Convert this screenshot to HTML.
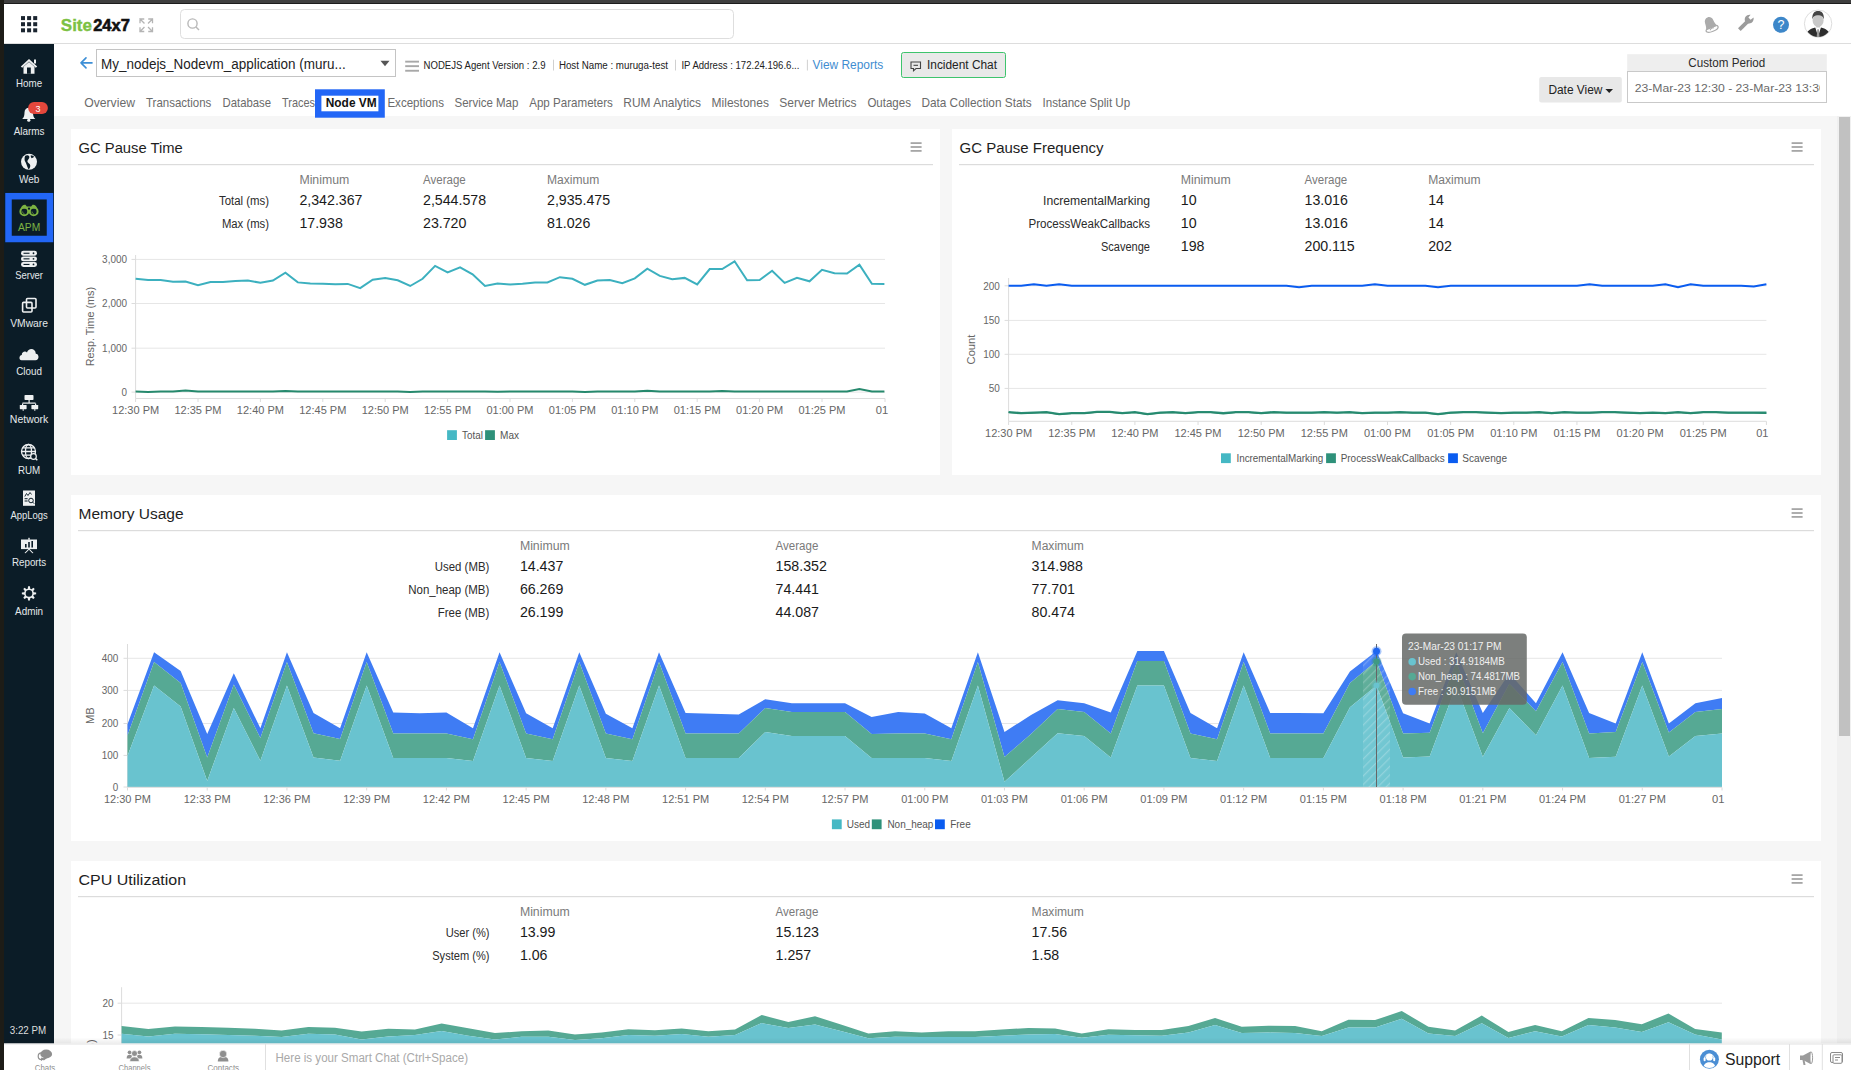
<!DOCTYPE html>
<html><head><meta charset="utf-8"><title>Site24x7 APM - Node VM</title>
<style>html,body{margin:0;padding:0;width:1851px;height:1070px;overflow:hidden;background:#f5f5f5;font-family:"Liberation Sans",sans-serif}svg{display:block}</style>
</head><body><svg width="1851" height="1070" viewBox="0 0 1851 1070" font-family="'Liberation Sans', sans-serif"><rect x="0" y="0" width="1851" height="1070" fill="#f6f6f6"/><rect x="0" y="0" width="1851" height="4" fill="#3f3f3f"/><rect x="0" y="3" width="1851" height="1" fill="#1c1c1c"/><rect x="0" y="0" width="4" height="1070" fill="#1d1c17"/><rect x="4" y="4" width="1847" height="40" fill="#ffffff"/><rect x="4" y="43" width="1847" height="1" fill="#dddddd"/><rect x="4" y="44" width="50" height="1000" fill="#0b1c27"/><rect x="54" y="44" width="1797" height="72" fill="#ffffff"/><rect x="1837" y="116" width="14" height="928" fill="#f0f0f0"/><rect x="1839" y="117" width="11" height="619" fill="#c1c1c1"/><rect x="21.0" y="16.1" width="4.0" height="4.0" fill="#1b2530"/><rect x="21.0" y="22.200000000000003" width="4.0" height="4.0" fill="#1b2530"/><rect x="21.0" y="28.3" width="4.0" height="4.0" fill="#1b2530"/><rect x="27.1" y="16.1" width="4.0" height="4.0" fill="#1b2530"/><rect x="27.1" y="22.200000000000003" width="4.0" height="4.0" fill="#1b2530"/><rect x="27.1" y="28.3" width="4.0" height="4.0" fill="#1b2530"/><rect x="33.2" y="16.1" width="4.0" height="4.0" fill="#1b2530"/><rect x="33.2" y="22.200000000000003" width="4.0" height="4.0" fill="#1b2530"/><rect x="33.2" y="28.3" width="4.0" height="4.0" fill="#1b2530"/><text x="60.8" y="31.1" font-size="16.6" fill="#7cc142" font-weight="bold" textLength="31.2" lengthAdjust="spacingAndGlyphs" stroke="#7cc142" stroke-width="0.35">Site</text><text x="93.2" y="31.1" font-size="16.6" fill="#111111" font-weight="bold" textLength="36.7" lengthAdjust="spacingAndGlyphs" stroke="#111" stroke-width="0.6">24x7</text><g stroke="#b4b4b4" stroke-width="1.3" fill="none" stroke-linecap="square"><path d="M140 19 L144 23 M140 19 h3.6 M140 19 v3.6"/><path d="M152.5 19 L148.5 23 M152.5 19 h-3.6 M152.5 19 v3.6"/><path d="M140 31.5 L144 27.5 M140 31.5 h3.6 M140 31.5 v-3.6"/><path d="M152.5 31.5 L148.5 27.5 M152.5 31.5 h-3.6 M152.5 31.5 v-3.6"/></g><rect x="180.5" y="9.5" width="553" height="29" rx="4" fill="#fff" stroke="#dedede"/><g stroke="#b8b8b8" stroke-width="1.4" fill="none"><circle cx="192.5" cy="23.5" r="4.6"/><path d="M196 27 L199 30"/></g><g transform="translate(1710.2,24.2) rotate(-22)" fill="#ababab"><path d="M-6.3 4.2 C-4.8 2.5 -4.6 -0.5 -4.4 -2.8 C-4.1 -5.8 -2.3 -7.3 0 -7.3 C2.3 -7.3 4.1 -5.8 4.4 -2.8 C4.6 -0.5 4.8 2.5 6.3 4.2 Z"/><ellipse cx="0" cy="5" rx="6.4" ry="2.6" fill="none" stroke="#ababab" stroke-width="1.3"/><path d="M-2.5 5.6 C-1 4.2 1 4.2 2 4.8" stroke="#ababab" stroke-width="1" fill="none"/></g><g fill="#9c9c9c"><path d="M1738 28.3 L1746.6 19.8 L1749.3 22.5 L1740.7 31 Z"/><path d="M1745.2 21.5 C1743.6 17.8 1746.5 14.2 1750.6 14.8 L1748.4 17.6 L1750.6 19.8 L1753.6 17.6 C1754.2 21.6 1751.2 24.6 1747.2 23.2 Z"/></g><circle cx="1781" cy="24.8" r="8" fill="#3d87c9"/><text x="1781.0" y="29.3" font-size="12.5" fill="#ffffff" text-anchor="middle">?</text><g><circle cx="1818.1" cy="23.7" r="13.7" fill="#fff" stroke="#d4d4d4" stroke-width="0.8"/><clipPath id="av"><circle cx="1818.1" cy="23.7" r="13.3"/></clipPath><g clip-path="url(#av)"><rect x="1816.2" y="25" width="3.8" height="4" fill="#c8c8c8"/><path d="M1805.5 36 C1807 30.5 1810.5 28.6 1815.3 27.4 L1818.1 36.5 L1820.9 27.4 C1825.7 28.6 1829.2 30.5 1830.7 36 L1830.7 40 L1805.5 40 Z" fill="#2d2d2d"/><path d="M1815.3 27.4 L1818.1 30.5 L1820.9 27.4 Z" fill="#fff"/><path d="M1817.3 29.2 L1818.9 29.2 L1819.6 38 L1816.6 38 Z" fill="#9a9a9a"/><ellipse cx="1818.1" cy="20.6" rx="5.5" ry="6.3" fill="#c8c8c8"/><path d="M1812.4 19.5 C1811.8 13.5 1814.5 11 1818.1 11 C1821.7 11 1824.4 13.5 1823.8 19.5 C1823.2 16.2 1821.2 15.2 1818.1 15.2 C1815 15.2 1813 16.2 1812.4 19.5 Z" fill="#454545"/></g></g><rect x="8.5" y="196.2" width="41.5" height="42.8" fill="none" stroke="#2266f6" stroke-width="6.5"/><text x="29.1" y="86.9" font-size="10.2" fill="#e4e8ea" text-anchor="middle" textLength="26.1" lengthAdjust="spacingAndGlyphs">Home</text><text x="29.1" y="134.6" font-size="10.2" fill="#e4e8ea" text-anchor="middle" textLength="30.9" lengthAdjust="spacingAndGlyphs">Alarms</text><text x="29.1" y="183.2" font-size="10.2" fill="#e4e8ea" text-anchor="middle" textLength="20.4" lengthAdjust="spacingAndGlyphs">Web</text><text x="29.1" y="231.1" font-size="10.2" fill="#7cb342" text-anchor="middle" textLength="22.2" lengthAdjust="spacingAndGlyphs">APM</text><text x="29.1" y="279.0" font-size="10.2" fill="#e4e8ea" text-anchor="middle" textLength="27.7" lengthAdjust="spacingAndGlyphs">Server</text><text x="29.1" y="327.0" font-size="10.2" fill="#e4e8ea" text-anchor="middle" textLength="37.8" lengthAdjust="spacingAndGlyphs">VMware</text><text x="29.1" y="374.7" font-size="10.2" fill="#e4e8ea" text-anchor="middle" textLength="25.8" lengthAdjust="spacingAndGlyphs">Cloud</text><text x="29.1" y="422.7" font-size="10.2" fill="#e4e8ea" text-anchor="middle" textLength="38.6" lengthAdjust="spacingAndGlyphs">Network</text><text x="29.1" y="473.8" font-size="10.2" fill="#e4e8ea" text-anchor="middle" textLength="22.3" lengthAdjust="spacingAndGlyphs">RUM</text><text x="29.1" y="518.5" font-size="10.2" fill="#e4e8ea" text-anchor="middle" textLength="37.4" lengthAdjust="spacingAndGlyphs">AppLogs</text><text x="29.1" y="566.1" font-size="10.2" fill="#e4e8ea" text-anchor="middle" textLength="34.3" lengthAdjust="spacingAndGlyphs">Reports</text><text x="29.1" y="614.5" font-size="10.2" fill="#e4e8ea" text-anchor="middle" textLength="28.0" lengthAdjust="spacingAndGlyphs">Admin</text><g fill="#eef0f1"><path d="M20.8 66.5 L29 59 L37.2 66.5 L35.8 67.8 L29 61.6 L22.2 67.8 Z"/><path d="M23.5 66.8 L29 62 L34.5 66.8 V73.8 H23.5 Z"/><rect x="34" y="59.5" width="2" height="4"/></g><rect x="27" y="67.5" width="3.8" height="6.3" fill="#0b1c27"/><g fill="#eef0f1"><path d="M22.2 119 C24 117.5 24.5 115 24.5 112.5 C24.5 109.5 26.5 107.8 28.8 107.8 C31.1 107.8 33 109.5 33 112.5 C33 115 33.5 117.5 35.3 119 Z"/><circle cx="28.8" cy="120.2" r="1.6"/></g><rect x="28.1" y="102.1" width="19.8" height="11.9" rx="5.9" fill="#e4473c"/><text x="37.9" y="111.6" font-size="9" fill="#ffffff" text-anchor="middle">3</text><circle cx="29" cy="161.8" r="8" fill="#eef0f1"/><path d="M25.2 155.8 C26.8 154.8 28.6 155.2 29.3 156.6 C29.8 158 28.4 159.2 27.6 160.4 C27 161.4 27.8 162.6 29 163.4 C30.4 164.4 30.8 166 29.6 168.2 L28.6 169.6 C27.8 167.8 27 166.2 26.4 164.2 C26 162.6 24.8 161.6 24.6 160 C24.4 158.4 24.6 157 25.2 155.8 Z M30.8 155.2 C32.2 155.2 33.6 156 34.2 157 C33.2 157.4 32.4 158.2 31.6 158.2 C31 157.4 30.6 156.4 30.8 155.2 Z" fill="#0b1c27"/><g fill="none" stroke="#7cb342" stroke-width="2"><circle cx="24.3" cy="211.4" r="3.9"/><circle cx="33.7" cy="211.4" r="3.9"/></g><path d="M21 208.5 C21.5 205.5 23.5 204.4 25.5 204.8 L26.8 206.5 L31.2 206.5 L32.5 204.8 C34.5 204.4 36.5 205.5 37 208.5 Z" fill="#7cb342"/><circle cx="29" cy="208.6" r="1.1" fill="#0b1c27"/><path d="M22.6 211.5 C22.6 212.8 23.4 213.6 24.5 213.8 M32 211.5 C32 212.8 32.8 213.6 33.9 213.8" stroke="#7cb342" stroke-width="0.7" fill="none"/><rect x="21" y="250.8" width="16" height="4.9" rx="2.4" fill="#eef0f1"/><rect x="23.5" y="252.70000000000002" width="6" height="1.1" fill="#0b1c27"/><circle cx="33.5" cy="253.25" r="0.9" fill="#0b1c27"/><rect x="21" y="256.4" width="16" height="4.9" rx="2.4" fill="#eef0f1"/><rect x="23.5" y="258.29999999999995" width="6" height="1.1" fill="#0b1c27"/><circle cx="33.5" cy="258.84999999999997" r="0.9" fill="#0b1c27"/><rect x="21" y="262.0" width="16" height="4.9" rx="2.4" fill="#eef0f1"/><rect x="23.5" y="263.9" width="6" height="1.1" fill="#0b1c27"/><circle cx="33.5" cy="264.45" r="0.9" fill="#0b1c27"/><g fill="none" stroke="#eef0f1" stroke-width="1.6"><rect x="26.5" y="298.5" width="9.5" height="9.5" rx="1"/><rect x="22.6" y="302.4" width="9.4" height="9.6" rx="1"/></g><path d="M21.5 360.3 C18.8 360.3 18.8 355.3 21.8 355 C21.5 351.8 25.5 350.5 27 352.5 C28 348 35.5 347.5 35.8 353.8 C39.5 354 39.5 360.3 35.5 360.3 Z" fill="#eef0f1"/><g fill="#eef0f1"><rect x="24.5" y="395" width="9" height="5" rx="0.8"/><rect x="28.5" y="400" width="1.2" height="3"/><rect x="22.5" y="402.5" width="13" height="1.2"/><rect x="22" y="403.5" width="1.2" height="1.8"/><rect x="35" y="403.5" width="1.2" height="1.8"/><rect x="19.8" y="405" width="6.8" height="4.2" rx="0.6"/><rect x="31.4" y="405" width="6.8" height="4.2" rx="0.6"/><rect x="22.6" y="409.2" width="1.2" height="1.5"/><rect x="34.2" y="409.2" width="1.2" height="1.5"/></g><g fill="none" stroke="#eef0f1" stroke-width="1.3"><circle cx="28.5" cy="451.5" r="7"/><ellipse cx="28.5" cy="451.5" rx="3" ry="7"/><path d="M21.5 451.5 H35.5 M22.5 447.8 H34.5 M22.5 455.2 H34.5"/></g><circle cx="33.5" cy="456.5" r="2.8" fill="#0b1c27" stroke="#eef0f1" stroke-width="1.2"/><path d="M35.5 458.5 L37.3 460.3" stroke="#eef0f1" stroke-width="1.4"/><rect x="23" y="490.5" width="12" height="15.3" fill="#eef0f1"/><path d="M24.8 496.5 L26.5 493.5 L28 495.5 L30 492.5 L31.5 494.5" stroke="#0b1c27" stroke-width="0.9" fill="none"/><rect x="24.6" y="498.2" width="3" height="1" fill="#0b1c27"/><rect x="24.6" y="500.5" width="3" height="1" fill="#0b1c27"/><circle cx="31" cy="500.5" r="2.3" fill="none" stroke="#0b1c27" stroke-width="1"/><path d="M32.6 502.1 L34.2 503.7" stroke="#0b1c27" stroke-width="1"/><g fill="#eef0f1"><rect x="21" y="539.5" width="16" height="9.6"/><rect x="28.3" y="537.8" width="1.4" height="2"/><path d="M28.4 549 L24.5 553 L25.6 553.2 L29 549.8 L32.4 553.2 L33.5 553 L29.6 549 Z"/></g><rect x="25" y="544" width="1.6" height="3.5" fill="#0b1c27"/><rect x="28.2" y="542" width="1.6" height="5.5" fill="#0b1c27"/><rect x="31.4" y="541" width="1.6" height="6.5" fill="#0b1c27"/><polygon points="33.74,592.14 36.14,592.47 36.14,594.33 33.74,594.66 33.24,595.86 34.71,597.79 33.39,599.11 31.46,597.64 30.26,598.14 29.93,600.54 28.07,600.54 27.74,598.14 26.54,597.64 24.61,599.11 23.29,597.79 24.76,595.86 24.26,594.66 21.86,594.33 21.86,592.47 24.26,592.14 24.76,590.94 23.29,589.01 24.61,587.69 26.54,589.16 27.74,588.66 28.07,586.26 29.93,586.26 30.26,588.66 31.46,589.16 33.39,587.69 34.71,589.01 33.24,590.94" fill="#eef0f1"/><circle cx="29" cy="593.4" r="3.3" fill="#0b1c27"/><text x="28.0" y="1034.3" font-size="10" fill="#dcdcdc" text-anchor="middle" textLength="36.5" lengthAdjust="spacingAndGlyphs">3:22 PM</text><path d="M81 62.9 H92 M81 62.9 L86 57.9 M81 62.9 L86 67.9" stroke="#3d8fd6" stroke-width="1.6" fill="none" stroke-linecap="round"/><rect x="96.5" y="49.5" width="299" height="27" fill="#fff" stroke="#c4c4c4"/><text x="101.0" y="68.8" font-size="14" fill="#222222" textLength="244.7" lengthAdjust="spacingAndGlyphs">My_nodejs_Nodevm_application (muru...</text><path d="M380.5 60.8 H389.5 L385 66.2 Z" fill="#555"/><rect x="405.2" y="60.7" width="13.8" height="1.9" fill="#a8a8a8"/><rect x="405.2" y="65.2" width="13.8" height="1.9" fill="#a8a8a8"/><rect x="405.2" y="69.8" width="13.8" height="1.9" fill="#a8a8a8"/><text x="423.5" y="68.8" font-size="10" fill="#222" textLength="122.0" lengthAdjust="spacingAndGlyphs">NODEJS Agent Version : 2.9</text><line x1="553.5" y1="59.7" x2="553.5" y2="70.5" stroke="#d0d0d0" stroke-width="1"/><text x="558.9" y="68.8" font-size="10" fill="#222" textLength="109.1" lengthAdjust="spacingAndGlyphs">Host Name : muruga-test</text><line x1="675.5" y1="59.7" x2="675.5" y2="70.5" stroke="#d0d0d0" stroke-width="1"/><text x="681.4" y="68.8" font-size="10" fill="#222" textLength="118.0" lengthAdjust="spacingAndGlyphs">IP Address : 172.24.196.6...</text><line x1="807.4" y1="59.7" x2="807.4" y2="70.5" stroke="#d0d0d0" stroke-width="1"/><text x="812.5" y="69.2" font-size="12.2" fill="#3f8dd1" textLength="70.7" lengthAdjust="spacingAndGlyphs">View Reports</text><rect x="901.5" y="52.5" width="104" height="25" rx="2" fill="#e9e9e9" stroke="#3ec46d"/><g fill="none" stroke="#444" stroke-width="1.1"><path d="M911 62 H920.5 V68.5 H916 L913.5 70.8 V68.5 H911 Z"/><path d="M913.5 65.3 H918"/></g><text x="927.0" y="69.2" font-size="12.5" fill="#222" textLength="70.0" lengthAdjust="spacingAndGlyphs">Incident Chat</text><text x="84.2" y="107.2" font-size="12.8" fill="#6b6b6b" textLength="50.8" lengthAdjust="spacingAndGlyphs">Overview</text><text x="146.0" y="107.2" font-size="12.8" fill="#6b6b6b" textLength="65.3" lengthAdjust="spacingAndGlyphs">Transactions</text><text x="222.5" y="107.2" font-size="12.8" fill="#6b6b6b" textLength="48.6" lengthAdjust="spacingAndGlyphs">Database</text><text x="282.1" y="107.2" font-size="12.8" fill="#6b6b6b" textLength="32.9" lengthAdjust="spacingAndGlyphs">Traces</text><text x="387.4" y="107.2" font-size="12.8" fill="#6b6b6b" textLength="56.6" lengthAdjust="spacingAndGlyphs">Exceptions</text><text x="454.5" y="107.2" font-size="12.8" fill="#6b6b6b" textLength="63.9" lengthAdjust="spacingAndGlyphs">Service Map</text><text x="529.2" y="107.2" font-size="12.8" fill="#6b6b6b" textLength="83.7" lengthAdjust="spacingAndGlyphs">App Parameters</text><text x="623.3" y="107.2" font-size="12.8" fill="#6b6b6b" textLength="77.7" lengthAdjust="spacingAndGlyphs">RUM Analytics</text><text x="711.6" y="107.2" font-size="12.8" fill="#6b6b6b" textLength="57.3" lengthAdjust="spacingAndGlyphs">Milestones</text><text x="779.3" y="107.2" font-size="12.8" fill="#6b6b6b" textLength="77.3" lengthAdjust="spacingAndGlyphs">Server Metrics</text><text x="867.4" y="107.2" font-size="12.8" fill="#6b6b6b" textLength="43.5" lengthAdjust="spacingAndGlyphs">Outages</text><text x="921.4" y="107.2" font-size="12.8" fill="#6b6b6b" textLength="110.3" lengthAdjust="spacingAndGlyphs">Data Collection Stats</text><text x="1042.5" y="107.2" font-size="12.8" fill="#6b6b6b" textLength="87.7" lengthAdjust="spacingAndGlyphs">Instance Split Up</text><rect x="318.2" y="92.5" width="63.4" height="22" fill="#fff" stroke="#2266f6" stroke-width="6.4"/><text x="325.8" y="107.2" font-size="12.8" fill="#111" font-weight="bold" textLength="50.8" lengthAdjust="spacingAndGlyphs">Node VM</text><rect x="1539.2" y="77.1" width="82.6" height="25.3" rx="2" fill="#e8e8e8"/><text x="1548.4" y="93.9" font-size="12" fill="#222" textLength="54.0" lengthAdjust="spacingAndGlyphs">Date View</text><path d="M1605.4 88.9 H1613 L1609.2 92.9 Z" fill="#222"/><rect x="1627.2" y="54.2" width="199.6" height="17.1" fill="#eeeeee"/><text x="1726.8" y="66.8" font-size="12" fill="#2a2a2a" text-anchor="middle" textLength="77.0" lengthAdjust="spacingAndGlyphs">Custom Period</text><rect x="1627.5" y="71.5" width="199" height="31" fill="#fff" stroke="#c9c9c9"/><clipPath id="dp"><rect x="1628" y="72" width="192" height="30"/></clipPath><g clip-path="url(#dp)"><text x="1634.7" y="91.9" font-size="11.5" fill="#6a6a6a" textLength="191.0" lengthAdjust="spacingAndGlyphs">23-Mar-23 12:30 - 23-Mar-23 13:30</text></g><rect x="71" y="129" width="869" height="346" fill="#ffffff"/><text x="78.5" y="153.0" font-size="15.3" fill="#1e1e1e" textLength="104.3" lengthAdjust="spacingAndGlyphs">GC Pause Time</text><rect x="78" y="164" width="855" height="1.2" fill="#dcdcdc"/><rect x="910.6" y="142.2" width="11" height="1.8" fill="#a6a6a6"/><rect x="910.6" y="146.1" width="11" height="1.8" fill="#a6a6a6"/><rect x="910.6" y="150.0" width="11" height="1.8" fill="#a6a6a6"/><rect x="952" y="129" width="869" height="346" fill="#ffffff"/><text x="959.5" y="153.0" font-size="15.3" fill="#1e1e1e" textLength="144.1" lengthAdjust="spacingAndGlyphs">GC Pause Frequency</text><rect x="959" y="164" width="855" height="1.2" fill="#dcdcdc"/><rect x="1791.6" y="142.2" width="11" height="1.8" fill="#a6a6a6"/><rect x="1791.6" y="146.1" width="11" height="1.8" fill="#a6a6a6"/><rect x="1791.6" y="150.0" width="11" height="1.8" fill="#a6a6a6"/><rect x="71" y="495" width="1750" height="346" fill="#ffffff"/><text x="78.5" y="519.0" font-size="15.3" fill="#1e1e1e" textLength="105.1" lengthAdjust="spacingAndGlyphs">Memory Usage</text><rect x="78" y="530" width="1736" height="1.2" fill="#dcdcdc"/><rect x="1791.6" y="508.2" width="11" height="1.8" fill="#a6a6a6"/><rect x="1791.6" y="512.1" width="11" height="1.8" fill="#a6a6a6"/><rect x="1791.6" y="516.0" width="11" height="1.8" fill="#a6a6a6"/><rect x="71" y="861" width="1750" height="339" fill="#ffffff"/><text x="78.5" y="885.0" font-size="15.3" fill="#1e1e1e" textLength="107.6" lengthAdjust="spacingAndGlyphs">CPU Utilization</text><rect x="78" y="896" width="1736" height="1.2" fill="#dcdcdc"/><rect x="1791.6" y="874.2" width="11" height="1.8" fill="#a6a6a6"/><rect x="1791.6" y="878.1" width="11" height="1.8" fill="#a6a6a6"/><rect x="1791.6" y="882.0" width="11" height="1.8" fill="#a6a6a6"/><text x="299.4" y="183.7" font-size="12" fill="#7a7a7a" textLength="49.9" lengthAdjust="spacingAndGlyphs">Minimum</text><text x="423.0" y="183.7" font-size="12" fill="#7a7a7a" textLength="42.7" lengthAdjust="spacingAndGlyphs">Average</text><text x="547.0" y="183.7" font-size="12" fill="#7a7a7a" textLength="52.3" lengthAdjust="spacingAndGlyphs">Maximum</text><text x="269.0" y="204.7" font-size="12.3" fill="#2b2b2b" text-anchor="end" textLength="50.0" lengthAdjust="spacingAndGlyphs">Total (ms)</text><text x="299.4" y="204.7" font-size="14.2" fill="#1a1a1a">2,342.367</text><text x="423.0" y="204.7" font-size="14.2" fill="#1a1a1a">2,544.578</text><text x="547.0" y="204.7" font-size="14.2" fill="#1a1a1a">2,935.475</text><text x="269.0" y="227.7" font-size="12.3" fill="#2b2b2b" text-anchor="end" textLength="47.1" lengthAdjust="spacingAndGlyphs">Max (ms)</text><text x="299.4" y="227.7" font-size="14.2" fill="#1a1a1a">17.938</text><text x="423.0" y="227.7" font-size="14.2" fill="#1a1a1a">23.720</text><text x="547.0" y="227.7" font-size="14.2" fill="#1a1a1a">81.026</text><text x="1180.8" y="183.7" font-size="12" fill="#7a7a7a" textLength="49.9" lengthAdjust="spacingAndGlyphs">Minimum</text><text x="1304.5" y="183.7" font-size="12" fill="#7a7a7a" textLength="42.7" lengthAdjust="spacingAndGlyphs">Average</text><text x="1428.2" y="183.7" font-size="12" fill="#7a7a7a" textLength="52.3" lengthAdjust="spacingAndGlyphs">Maximum</text><text x="1150.0" y="204.7" font-size="12.3" fill="#2b2b2b" text-anchor="end" textLength="107.0" lengthAdjust="spacingAndGlyphs">IncrementalMarking</text><text x="1180.8" y="204.7" font-size="14.2" fill="#1a1a1a">10</text><text x="1304.5" y="204.7" font-size="14.2" fill="#1a1a1a">13.016</text><text x="1428.2" y="204.7" font-size="14.2" fill="#1a1a1a">14</text><text x="1150.0" y="227.7" font-size="12.3" fill="#2b2b2b" text-anchor="end" textLength="121.5" lengthAdjust="spacingAndGlyphs">ProcessWeakCallbacks</text><text x="1180.8" y="227.7" font-size="14.2" fill="#1a1a1a">10</text><text x="1304.5" y="227.7" font-size="14.2" fill="#1a1a1a">13.016</text><text x="1428.2" y="227.7" font-size="14.2" fill="#1a1a1a">14</text><text x="1150.0" y="250.7" font-size="12.3" fill="#2b2b2b" text-anchor="end" textLength="49.0" lengthAdjust="spacingAndGlyphs">Scavenge</text><text x="1180.8" y="250.7" font-size="14.2" fill="#1a1a1a">198</text><text x="1304.5" y="250.7" font-size="14.2" fill="#1a1a1a">200.115</text><text x="1428.2" y="250.7" font-size="14.2" fill="#1a1a1a">202</text><text x="519.9" y="549.7" font-size="12" fill="#7a7a7a" textLength="49.9" lengthAdjust="spacingAndGlyphs">Minimum</text><text x="775.6" y="549.7" font-size="12" fill="#7a7a7a" textLength="42.7" lengthAdjust="spacingAndGlyphs">Average</text><text x="1031.6" y="549.7" font-size="12" fill="#7a7a7a" textLength="52.3" lengthAdjust="spacingAndGlyphs">Maximum</text><text x="489.3" y="570.7" font-size="12.3" fill="#2b2b2b" text-anchor="end" textLength="54.5" lengthAdjust="spacingAndGlyphs">Used (MB)</text><text x="519.9" y="570.7" font-size="14.2" fill="#1a1a1a">14.437</text><text x="775.6" y="570.7" font-size="14.2" fill="#1a1a1a">158.352</text><text x="1031.6" y="570.7" font-size="14.2" fill="#1a1a1a">314.988</text><text x="489.3" y="593.7" font-size="12.3" fill="#2b2b2b" text-anchor="end" textLength="81.0" lengthAdjust="spacingAndGlyphs">Non_heap (MB)</text><text x="519.9" y="593.7" font-size="14.2" fill="#1a1a1a">66.269</text><text x="775.6" y="593.7" font-size="14.2" fill="#1a1a1a">74.441</text><text x="1031.6" y="593.7" font-size="14.2" fill="#1a1a1a">77.701</text><text x="489.3" y="616.7" font-size="12.3" fill="#2b2b2b" text-anchor="end" textLength="51.5" lengthAdjust="spacingAndGlyphs">Free (MB)</text><text x="519.9" y="616.7" font-size="14.2" fill="#1a1a1a">26.199</text><text x="775.6" y="616.7" font-size="14.2" fill="#1a1a1a">44.087</text><text x="1031.6" y="616.7" font-size="14.2" fill="#1a1a1a">80.474</text><text x="519.9" y="915.6" font-size="12" fill="#7a7a7a" textLength="49.9" lengthAdjust="spacingAndGlyphs">Minimum</text><text x="775.6" y="915.6" font-size="12" fill="#7a7a7a" textLength="42.7" lengthAdjust="spacingAndGlyphs">Average</text><text x="1031.6" y="915.6" font-size="12" fill="#7a7a7a" textLength="52.3" lengthAdjust="spacingAndGlyphs">Maximum</text><text x="489.5" y="936.6" font-size="12.3" fill="#2b2b2b" text-anchor="end" textLength="43.8" lengthAdjust="spacingAndGlyphs">User (%)</text><text x="519.9" y="936.6" font-size="14.2" fill="#1a1a1a">13.99</text><text x="775.6" y="936.6" font-size="14.2" fill="#1a1a1a">15.123</text><text x="1031.6" y="936.6" font-size="14.2" fill="#1a1a1a">17.56</text><text x="489.5" y="959.6" font-size="12.3" fill="#2b2b2b" text-anchor="end" textLength="57.3" lengthAdjust="spacingAndGlyphs">System (%)</text><text x="519.9" y="959.6" font-size="14.2" fill="#1a1a1a">1.06</text><text x="775.6" y="959.6" font-size="14.2" fill="#1a1a1a">1.257</text><text x="1031.6" y="959.6" font-size="14.2" fill="#1a1a1a">1.58</text><line x1="135.6" y1="259.4" x2="885" y2="259.4" stroke="#e6e6e6" stroke-width="1"/><line x1="131.5" y1="259.4" x2="135.6" y2="259.4" stroke="#dcdcdc" stroke-width="1"/><text x="127.0" y="263.2" font-size="11.2" fill="#666666" text-anchor="end" textLength="24.9" lengthAdjust="spacingAndGlyphs">3,000</text><line x1="135.6" y1="303.5" x2="885" y2="303.5" stroke="#e6e6e6" stroke-width="1"/><line x1="131.5" y1="303.5" x2="135.6" y2="303.5" stroke="#dcdcdc" stroke-width="1"/><text x="127.0" y="307.3" font-size="11.2" fill="#666666" text-anchor="end" textLength="24.9" lengthAdjust="spacingAndGlyphs">2,000</text><line x1="135.6" y1="348.2" x2="885" y2="348.2" stroke="#e6e6e6" stroke-width="1"/><line x1="131.5" y1="348.2" x2="135.6" y2="348.2" stroke="#dcdcdc" stroke-width="1"/><text x="127.0" y="352.0" font-size="11.2" fill="#666666" text-anchor="end" textLength="24.9" lengthAdjust="spacingAndGlyphs">1,000</text><line x1="135.6" y1="392.1" x2="885" y2="392.1" stroke="#e6e6e6" stroke-width="1"/><line x1="131.5" y1="392.1" x2="135.6" y2="392.1" stroke="#dcdcdc" stroke-width="1"/><text x="127.0" y="395.9" font-size="11.2" fill="#666666" text-anchor="end" textLength="5.5" lengthAdjust="spacingAndGlyphs">0</text><line x1="135.6" y1="255" x2="135.6" y2="398.5" stroke="#dcdcdc" stroke-width="1"/><line x1="135.6" y1="398.5" x2="885" y2="398.5" stroke="#dcdcdc" stroke-width="1"/><polyline points="135.6,391.5 148.1,392.0 160.6,391.5 173.0,391.5 185.5,390.5 198.0,391.5 210.5,391.5 223.0,391.5 235.4,391.5 247.9,391.5 260.4,391.5 272.9,391.5 285.4,391.0 297.8,391.5 310.3,391.5 322.8,391.5 335.3,391.5 347.8,391.5 360.2,391.5 372.7,391.5 385.2,391.5 397.7,391.5 410.2,392.0 422.6,391.5 435.1,391.5 447.6,391.5 460.1,391.5 472.6,391.5 485.0,391.5 497.5,391.8 510.0,391.5 522.5,391.5 535.0,391.5 547.4,391.5 559.9,391.5 572.4,391.5 584.9,391.9 597.4,391.5 609.8,391.5 622.3,391.5 634.8,391.5 647.3,390.7 659.8,391.5 672.2,391.5 684.7,391.5 697.2,391.5 709.7,391.5 722.2,391.0 734.6,391.5 747.1,391.5 759.6,391.5 772.1,391.5 784.6,391.5 797.0,391.5 809.5,391.5 822.0,391.5 834.5,391.5 847.0,391.5 859.4,388.9 871.9,391.5 884.4,391.5" fill="none" stroke="#26896d" stroke-width="2"/><polyline points="135.6,278.8 148.1,280.1 160.6,280.0 173.0,281.8 185.5,281.6 198.0,285.3 210.5,282.1 223.0,281.9 235.4,281.1 247.9,280.6 260.4,282.7 272.9,280.5 285.4,272.7 297.8,282.4 310.3,283.5 322.8,283.7 335.3,284.2 347.8,283.9 360.2,288.1 372.7,279.7 385.2,278.0 397.7,280.3 410.2,286.0 422.6,278.8 435.1,265.9 447.6,272.4 460.1,267.3 472.6,274.3 485.0,286.0 497.5,283.5 510.0,284.4 522.5,283.7 535.0,282.4 547.4,282.4 559.9,277.2 572.4,278.8 584.9,284.8 597.4,280.5 609.8,280.0 622.3,283.2 634.8,278.4 647.3,268.6 659.8,275.9 672.2,279.2 684.7,277.9 697.2,284.4 709.7,269.0 722.2,269.0 734.6,261.3 747.1,280.3 759.6,280.0 772.1,270.7 784.6,282.9 797.0,277.9 809.5,281.3 822.0,269.8 834.5,273.2 847.0,273.5 859.4,264.6 871.9,283.7 884.4,284.0" fill="none" stroke="#3cb0bf" stroke-width="2"/><line x1="135.6" y1="398.5" x2="135.6" y2="402" stroke="#dcdcdc" stroke-width="1"/><text x="135.6" y="413.8" font-size="11" fill="#666666" text-anchor="middle">12:30 PM</text><line x1="198.0" y1="398.5" x2="198.0" y2="402" stroke="#dcdcdc" stroke-width="1"/><text x="198.0" y="413.8" font-size="11" fill="#666666" text-anchor="middle">12:35 PM</text><line x1="260.4" y1="398.5" x2="260.4" y2="402" stroke="#dcdcdc" stroke-width="1"/><text x="260.4" y="413.8" font-size="11" fill="#666666" text-anchor="middle">12:40 PM</text><line x1="322.8" y1="398.5" x2="322.8" y2="402" stroke="#dcdcdc" stroke-width="1"/><text x="322.8" y="413.8" font-size="11" fill="#666666" text-anchor="middle">12:45 PM</text><line x1="385.20000000000005" y1="398.5" x2="385.20000000000005" y2="402" stroke="#dcdcdc" stroke-width="1"/><text x="385.2" y="413.8" font-size="11" fill="#666666" text-anchor="middle">12:50 PM</text><line x1="447.6" y1="398.5" x2="447.6" y2="402" stroke="#dcdcdc" stroke-width="1"/><text x="447.6" y="413.8" font-size="11" fill="#666666" text-anchor="middle">12:55 PM</text><line x1="510.0" y1="398.5" x2="510.0" y2="402" stroke="#dcdcdc" stroke-width="1"/><text x="510.0" y="413.8" font-size="11" fill="#666666" text-anchor="middle">01:00 PM</text><line x1="572.4" y1="398.5" x2="572.4" y2="402" stroke="#dcdcdc" stroke-width="1"/><text x="572.4" y="413.8" font-size="11" fill="#666666" text-anchor="middle">01:05 PM</text><line x1="634.8000000000001" y1="398.5" x2="634.8000000000001" y2="402" stroke="#dcdcdc" stroke-width="1"/><text x="634.8" y="413.8" font-size="11" fill="#666666" text-anchor="middle">01:10 PM</text><line x1="697.2" y1="398.5" x2="697.2" y2="402" stroke="#dcdcdc" stroke-width="1"/><text x="697.2" y="413.8" font-size="11" fill="#666666" text-anchor="middle">01:15 PM</text><line x1="759.6" y1="398.5" x2="759.6" y2="402" stroke="#dcdcdc" stroke-width="1"/><text x="759.6" y="413.8" font-size="11" fill="#666666" text-anchor="middle">01:20 PM</text><line x1="822.0" y1="398.5" x2="822.0" y2="402" stroke="#dcdcdc" stroke-width="1"/><text x="822.0" y="413.8" font-size="11" fill="#666666" text-anchor="middle">01:25 PM</text><line x1="885" y1="398.5" x2="885" y2="402" stroke="#dcdcdc" stroke-width="1"/><text x="875.8" y="413.8" font-size="11.2" fill="#666666">01</text><text x="94.5" y="326.6" font-size="11.2" fill="#666666" text-anchor="middle" textLength="79.5" lengthAdjust="spacingAndGlyphs" transform="rotate(-90 94.5 326.6)">Resp. Time (ms)</text><rect x="447.1" y="430.2" width="9.8" height="9.8" fill="#45b8c4"/><text x="462.1" y="438.9" font-size="11" fill="#555" textLength="20.8" lengthAdjust="spacingAndGlyphs">Total</text><rect x="485.1" y="430.2" width="9.8" height="9.8" fill="#2e917a"/><text x="500.1" y="438.9" font-size="11" fill="#555" textLength="19.0" lengthAdjust="spacingAndGlyphs">Max</text><line x1="1008.6" y1="285.8" x2="1766.4" y2="285.8" stroke="#e6e6e6" stroke-width="1"/><line x1="1004.6" y1="285.8" x2="1008.6" y2="285.8" stroke="#dcdcdc" stroke-width="1"/><text x="999.8" y="289.6" font-size="11.2" fill="#666666" text-anchor="end" textLength="16.6" lengthAdjust="spacingAndGlyphs">200</text><line x1="1008.6" y1="320.4" x2="1766.4" y2="320.4" stroke="#e6e6e6" stroke-width="1"/><line x1="1004.6" y1="320.4" x2="1008.6" y2="320.4" stroke="#dcdcdc" stroke-width="1"/><text x="999.8" y="324.2" font-size="11.2" fill="#666666" text-anchor="end" textLength="16.6" lengthAdjust="spacingAndGlyphs">150</text><line x1="1008.6" y1="354.3" x2="1766.4" y2="354.3" stroke="#e6e6e6" stroke-width="1"/><line x1="1004.6" y1="354.3" x2="1008.6" y2="354.3" stroke="#dcdcdc" stroke-width="1"/><text x="999.8" y="358.1" font-size="11.2" fill="#666666" text-anchor="end" textLength="16.6" lengthAdjust="spacingAndGlyphs">100</text><line x1="1008.6" y1="388.4" x2="1766.4" y2="388.4" stroke="#e6e6e6" stroke-width="1"/><line x1="1004.6" y1="388.4" x2="1008.6" y2="388.4" stroke="#dcdcdc" stroke-width="1"/><text x="999.8" y="392.2" font-size="11.2" fill="#666666" text-anchor="end" textLength="11.1" lengthAdjust="spacingAndGlyphs">50</text><line x1="1008.6" y1="278" x2="1008.6" y2="421.3" stroke="#dcdcdc" stroke-width="1"/><line x1="1008.6" y1="421.3" x2="1766.4" y2="421.3" stroke="#dcdcdc" stroke-width="1"/><polyline points="1008.6,411.9 1021.2,412.9 1033.9,412.4 1046.5,411.9 1059.1,413.9 1071.8,412.9 1084.4,412.9 1097.0,411.7 1109.6,411.7 1122.3,412.9 1134.9,411.9 1147.5,413.9 1160.2,412.4 1172.8,411.9 1185.4,412.9 1198.0,411.9 1210.7,411.9 1223.3,413.1 1235.9,411.9 1248.6,411.9 1261.2,412.9 1273.8,411.9 1286.5,412.4 1299.1,412.4 1311.7,412.4 1324.3,411.9 1337.0,412.4 1349.6,411.9 1362.2,412.9 1374.9,412.4 1387.5,412.4 1400.1,411.9 1412.8,412.4 1425.4,412.4 1438.0,413.9 1450.7,412.4 1463.3,411.9 1475.9,411.9 1488.5,412.4 1501.2,412.9 1513.8,412.4 1526.4,412.4 1539.1,411.9 1551.7,412.9 1564.3,411.9 1577.0,412.4 1589.6,412.4 1602.2,411.9 1614.8,411.9 1627.5,412.4 1640.1,412.9 1652.7,412.4 1665.4,412.9 1678.0,411.9 1690.6,412.9 1703.2,411.9 1715.9,411.9 1728.5,412.4 1741.1,412.4 1753.8,412.4 1766.4,412.6" fill="none" stroke="#2e917a" stroke-width="2"/><polyline points="1008.6,412.5 1021.2,413.5 1033.9,413.0 1046.5,412.5 1059.1,414.5 1071.8,413.5 1084.4,413.5 1097.0,412.3 1109.6,412.3 1122.3,413.5 1134.9,412.5 1147.5,414.5 1160.2,413.0 1172.8,412.5 1185.4,413.5 1198.0,412.5 1210.7,412.5 1223.3,413.7 1235.9,412.5 1248.6,412.5 1261.2,413.5 1273.8,412.5 1286.5,413.0 1299.1,413.0 1311.7,413.0 1324.3,412.5 1337.0,413.0 1349.6,412.5 1362.2,413.5 1374.9,413.0 1387.5,413.0 1400.1,412.5 1412.8,413.0 1425.4,413.0 1438.0,414.5 1450.7,413.0 1463.3,412.5 1475.9,412.5 1488.5,413.0 1501.2,413.5 1513.8,413.0 1526.4,413.0 1539.1,412.5 1551.7,413.5 1564.3,412.5 1577.0,413.0 1589.6,413.0 1602.2,412.5 1614.8,412.5 1627.5,413.0 1640.1,413.5 1652.7,413.0 1665.4,413.5 1678.0,412.5 1690.6,413.5 1703.2,412.5 1715.9,412.5 1728.5,413.0 1741.1,413.0 1753.8,413.0 1766.4,413.2" fill="none" stroke="#26896d" stroke-width="1.6"/><polyline points="1008.6,285.8 1021.2,285.8 1033.9,284.3 1046.5,285.8 1059.1,284.3 1071.8,285.8 1084.4,285.8 1097.0,285.8 1109.6,285.8 1122.3,285.8 1134.9,285.8 1147.5,285.8 1160.2,285.8 1172.8,285.8 1185.4,285.8 1198.0,285.8 1210.7,285.8 1223.3,285.8 1235.9,285.8 1248.6,285.8 1261.2,285.8 1273.8,285.8 1286.5,285.8 1299.1,287.3 1311.7,285.8 1324.3,285.8 1337.0,285.8 1349.6,285.8 1362.2,285.8 1374.9,284.3 1387.5,285.8 1400.1,285.8 1412.8,285.8 1425.4,285.8 1438.0,287.3 1450.7,285.8 1463.3,285.8 1475.9,285.8 1488.5,285.8 1501.2,285.8 1513.8,285.8 1526.4,285.8 1539.1,285.8 1551.7,285.8 1564.3,285.8 1577.0,285.8 1589.6,284.3 1602.2,285.8 1614.8,285.8 1627.5,285.8 1640.1,285.8 1652.7,285.8 1665.4,284.3 1678.0,287.3 1690.6,284.3 1703.2,285.8 1715.9,285.8 1728.5,285.8 1741.1,285.8 1753.8,286.5 1766.4,284.3" fill="none" stroke="#0a5cf0" stroke-width="2"/><line x1="1008.6" y1="421.3" x2="1008.6" y2="425" stroke="#dcdcdc" stroke-width="1"/><text x="1008.6" y="437.1" font-size="11" fill="#666666" text-anchor="middle">12:30 PM</text><line x1="1071.75" y1="421.3" x2="1071.75" y2="425" stroke="#dcdcdc" stroke-width="1"/><text x="1071.8" y="437.1" font-size="11" fill="#666666" text-anchor="middle">12:35 PM</text><line x1="1134.9" y1="421.3" x2="1134.9" y2="425" stroke="#dcdcdc" stroke-width="1"/><text x="1134.9" y="437.1" font-size="11" fill="#666666" text-anchor="middle">12:40 PM</text><line x1="1198.05" y1="421.3" x2="1198.05" y2="425" stroke="#dcdcdc" stroke-width="1"/><text x="1198.0" y="437.1" font-size="11" fill="#666666" text-anchor="middle">12:45 PM</text><line x1="1261.2" y1="421.3" x2="1261.2" y2="425" stroke="#dcdcdc" stroke-width="1"/><text x="1261.2" y="437.1" font-size="11" fill="#666666" text-anchor="middle">12:50 PM</text><line x1="1324.35" y1="421.3" x2="1324.35" y2="425" stroke="#dcdcdc" stroke-width="1"/><text x="1324.3" y="437.1" font-size="11" fill="#666666" text-anchor="middle">12:55 PM</text><line x1="1387.5" y1="421.3" x2="1387.5" y2="425" stroke="#dcdcdc" stroke-width="1"/><text x="1387.5" y="437.1" font-size="11" fill="#666666" text-anchor="middle">01:00 PM</text><line x1="1450.65" y1="421.3" x2="1450.65" y2="425" stroke="#dcdcdc" stroke-width="1"/><text x="1450.7" y="437.1" font-size="11" fill="#666666" text-anchor="middle">01:05 PM</text><line x1="1513.8000000000002" y1="421.3" x2="1513.8000000000002" y2="425" stroke="#dcdcdc" stroke-width="1"/><text x="1513.8" y="437.1" font-size="11" fill="#666666" text-anchor="middle">01:10 PM</text><line x1="1576.95" y1="421.3" x2="1576.95" y2="425" stroke="#dcdcdc" stroke-width="1"/><text x="1577.0" y="437.1" font-size="11" fill="#666666" text-anchor="middle">01:15 PM</text><line x1="1640.1" y1="421.3" x2="1640.1" y2="425" stroke="#dcdcdc" stroke-width="1"/><text x="1640.1" y="437.1" font-size="11" fill="#666666" text-anchor="middle">01:20 PM</text><line x1="1703.25" y1="421.3" x2="1703.25" y2="425" stroke="#dcdcdc" stroke-width="1"/><text x="1703.2" y="437.1" font-size="11" fill="#666666" text-anchor="middle">01:25 PM</text><line x1="1766.4" y1="421.3" x2="1766.4" y2="425" stroke="#dcdcdc" stroke-width="1"/><text x="1756.2" y="437.1" font-size="11" fill="#666666">01</text><text x="975.0" y="349.5" font-size="11.2" fill="#666666" text-anchor="middle" transform="rotate(-90 975 349.5)">Count</text><rect x="1221" y="453.3" width="9.8" height="9.8" fill="#45b8c4"/><text x="1236.4" y="462.0" font-size="11" fill="#555" textLength="86.8" lengthAdjust="spacingAndGlyphs">IncrementalMarking</text><rect x="1326.1" y="453.3" width="9.8" height="9.8" fill="#2e917a"/><text x="1340.7" y="462.0" font-size="11" fill="#555" textLength="104.1" lengthAdjust="spacingAndGlyphs">ProcessWeakCallbacks</text><rect x="1448.1" y="453.3" width="9.8" height="9.8" fill="#0a5cf0"/><text x="1462.2" y="462.0" font-size="11" fill="#555" textLength="44.8" lengthAdjust="spacingAndGlyphs">Scavenge</text><line x1="127.5" y1="658.3" x2="1722" y2="658.3" stroke="#e6e6e6" stroke-width="1"/><line x1="123.5" y1="658.3" x2="127.5" y2="658.3" stroke="#dcdcdc" stroke-width="1"/><text x="118.3" y="662.1" font-size="11.2" fill="#666666" text-anchor="end" textLength="16.6" lengthAdjust="spacingAndGlyphs">400</text><line x1="127.5" y1="690.4" x2="1722" y2="690.4" stroke="#e6e6e6" stroke-width="1"/><line x1="123.5" y1="690.4" x2="127.5" y2="690.4" stroke="#dcdcdc" stroke-width="1"/><text x="118.3" y="694.2" font-size="11.2" fill="#666666" text-anchor="end" textLength="16.6" lengthAdjust="spacingAndGlyphs">300</text><line x1="127.5" y1="723.5" x2="1722" y2="723.5" stroke="#e6e6e6" stroke-width="1"/><line x1="123.5" y1="723.5" x2="127.5" y2="723.5" stroke="#dcdcdc" stroke-width="1"/><text x="118.3" y="727.3" font-size="11.2" fill="#666666" text-anchor="end" textLength="16.6" lengthAdjust="spacingAndGlyphs">200</text><line x1="127.5" y1="755.4" x2="1722" y2="755.4" stroke="#e6e6e6" stroke-width="1"/><line x1="123.5" y1="755.4" x2="127.5" y2="755.4" stroke="#dcdcdc" stroke-width="1"/><text x="118.3" y="759.2" font-size="11.2" fill="#666666" text-anchor="end" textLength="16.6" lengthAdjust="spacingAndGlyphs">100</text><line x1="127.5" y1="787" x2="1722" y2="787" stroke="#e6e6e6" stroke-width="1"/><line x1="123.5" y1="787" x2="127.5" y2="787" stroke="#dcdcdc" stroke-width="1"/><text x="118.3" y="790.8" font-size="11.2" fill="#666666" text-anchor="end" textLength="5.5" lengthAdjust="spacingAndGlyphs">0</text><line x1="127.5" y1="644" x2="127.5" y2="787" stroke="#dcdcdc" stroke-width="1"/><polygon points="127.50,724.30 154.07,652.20 180.65,671.10 207.22,734.00 233.80,673.20 260.38,728.30 286.95,652.20 313.52,713.00 340.10,728.30 366.67,652.20 393.25,712.40 419.82,713.30 446.40,712.40 472.97,728.30 499.55,652.20 526.12,713.30 552.70,728.30 579.27,652.20 605.85,713.70 632.42,728.30 659.00,652.20 685.57,712.90 712.15,713.70 738.73,714.60 765.30,699.20 791.88,703.20 818.45,703.20 845.02,703.20 871.60,717.00 898.17,712.10 924.75,713.40 951.32,728.30 977.90,652.20 1004.48,732.10 1031.05,714.90 1057.62,700.30 1084.20,703.20 1110.78,712.40 1137.35,651.00 1163.92,651.00 1190.50,712.90 1217.08,728.30 1243.65,652.20 1270.22,712.90 1296.80,712.90 1323.38,713.30 1349.95,671.60 1376.52,651.00 1403.10,713.30 1429.67,723.50 1456.25,652.20 1482.83,712.90 1509.40,673.20 1535.97,703.20 1562.55,652.20 1589.12,712.90 1615.70,723.50 1642.27,652.20 1668.85,723.50 1695.42,703.20 1722.00,697.90 1722.00,708.90 1695.42,712.10 1668.85,732.40 1642.27,661.90 1615.70,732.10 1589.12,733.50 1562.55,661.90 1535.97,711.30 1509.40,683.80 1482.83,733.20 1456.25,661.90 1429.67,732.70 1403.10,733.50 1376.52,661.10 1349.95,683.00 1323.38,733.50 1296.80,733.50 1270.22,733.50 1243.65,661.90 1217.08,739.20 1190.50,733.50 1163.92,661.10 1137.35,661.10 1110.78,733.50 1084.20,712.10 1057.62,708.90 1031.05,734.00 1004.48,757.00 977.90,661.90 951.32,739.20 924.75,733.50 898.17,733.50 871.60,734.00 845.02,712.10 818.45,712.10 791.88,712.10 765.30,708.10 738.73,733.50 712.15,733.50 685.57,733.50 659.00,661.90 632.42,739.20 605.85,733.50 579.27,661.90 552.70,739.20 526.12,733.50 499.55,661.90 472.97,739.20 446.40,733.50 419.82,733.50 393.25,733.50 366.67,661.90 340.10,738.90 313.52,733.20 286.95,661.90 260.38,738.00 233.80,684.60 207.22,757.50 180.65,683.00 154.07,661.90 127.50,735.60" fill="#3f7cf4"/><polygon points="127.50,735.60 154.07,661.90 180.65,683.00 207.22,757.50 233.80,684.60 260.38,738.00 286.95,661.90 313.52,733.20 340.10,738.90 366.67,661.90 393.25,733.50 419.82,733.50 446.40,733.50 472.97,739.20 499.55,661.90 526.12,733.50 552.70,739.20 579.27,661.90 605.85,733.50 632.42,739.20 659.00,661.90 685.57,733.50 712.15,733.50 738.73,733.50 765.30,708.10 791.88,712.10 818.45,712.10 845.02,712.10 871.60,734.00 898.17,733.50 924.75,733.50 951.32,739.20 977.90,661.90 1004.48,757.00 1031.05,734.00 1057.62,708.90 1084.20,712.10 1110.78,733.50 1137.35,661.10 1163.92,661.10 1190.50,733.50 1217.08,739.20 1243.65,661.90 1270.22,733.50 1296.80,733.50 1323.38,733.50 1349.95,683.00 1376.52,661.10 1403.10,733.50 1429.67,732.70 1456.25,661.90 1482.83,733.20 1509.40,683.80 1535.97,711.30 1562.55,661.90 1589.12,733.50 1615.70,732.10 1642.27,661.90 1668.85,732.40 1695.42,712.10 1722.00,708.90 1722.00,733.50 1695.42,735.90 1668.85,756.40 1642.27,685.40 1615.70,756.70 1589.12,758.00 1562.55,685.40 1535.97,735.30 1509.40,708.10 1482.83,756.70 1456.25,685.40 1429.67,756.40 1403.10,757.50 1376.52,685.40 1349.95,707.30 1323.38,758.00 1296.80,758.00 1270.22,758.00 1243.65,685.40 1217.08,761.10 1190.50,758.00 1163.92,685.40 1137.35,685.40 1110.78,757.50 1084.20,735.90 1057.62,733.20 1031.05,757.50 1004.48,781.80 977.90,685.40 951.32,761.10 924.75,758.00 898.17,758.00 871.60,758.00 845.02,735.90 818.45,735.90 791.88,735.90 765.30,731.90 738.73,758.00 712.15,758.00 685.57,758.00 659.00,685.40 632.42,761.10 605.85,758.00 579.27,685.40 552.70,761.10 526.12,758.00 499.55,685.40 472.97,761.10 446.40,758.00 419.82,758.00 393.25,758.00 366.67,685.40 340.10,760.70 313.52,757.50 286.95,685.40 260.38,760.70 233.80,708.00 207.22,781.00 180.65,706.50 154.07,685.40 127.50,755.90" fill="#56a994"/><polygon points="127.50,755.90 154.07,685.40 180.65,706.50 207.22,781.00 233.80,708.00 260.38,760.70 286.95,685.40 313.52,757.50 340.10,760.70 366.67,685.40 393.25,758.00 419.82,758.00 446.40,758.00 472.97,761.10 499.55,685.40 526.12,758.00 552.70,761.10 579.27,685.40 605.85,758.00 632.42,761.10 659.00,685.40 685.57,758.00 712.15,758.00 738.73,758.00 765.30,731.90 791.88,735.90 818.45,735.90 845.02,735.90 871.60,758.00 898.17,758.00 924.75,758.00 951.32,761.10 977.90,685.40 1004.48,781.80 1031.05,757.50 1057.62,733.20 1084.20,735.90 1110.78,757.50 1137.35,685.40 1163.92,685.40 1190.50,758.00 1217.08,761.10 1243.65,685.40 1270.22,758.00 1296.80,758.00 1323.38,758.00 1349.95,707.30 1376.52,685.40 1403.10,757.50 1429.67,756.40 1456.25,685.40 1482.83,756.70 1509.40,708.10 1535.97,735.30 1562.55,685.40 1589.12,758.00 1615.70,756.70 1642.27,685.40 1668.85,756.40 1695.42,735.90 1722.00,733.50 1722.00,787 127.50,787" fill="#69c3cf"/><line x1="127.5" y1="787.3" x2="1722" y2="787.3" stroke="#dcdcdc" stroke-width="1"/><line x1="127.5" y1="787.5" x2="127.5" y2="790.5" stroke="#dcdcdc" stroke-width="1"/><text x="127.5" y="802.6" font-size="11" fill="#666666" text-anchor="middle">12:30 PM</text><line x1="207.225" y1="787.5" x2="207.225" y2="790.5" stroke="#dcdcdc" stroke-width="1"/><text x="207.2" y="802.6" font-size="11" fill="#666666" text-anchor="middle">12:33 PM</text><line x1="286.95" y1="787.5" x2="286.95" y2="790.5" stroke="#dcdcdc" stroke-width="1"/><text x="286.9" y="802.6" font-size="11" fill="#666666" text-anchor="middle">12:36 PM</text><line x1="366.67499999999995" y1="787.5" x2="366.67499999999995" y2="790.5" stroke="#dcdcdc" stroke-width="1"/><text x="366.7" y="802.6" font-size="11" fill="#666666" text-anchor="middle">12:39 PM</text><line x1="446.4" y1="787.5" x2="446.4" y2="790.5" stroke="#dcdcdc" stroke-width="1"/><text x="446.4" y="802.6" font-size="11" fill="#666666" text-anchor="middle">12:42 PM</text><line x1="526.125" y1="787.5" x2="526.125" y2="790.5" stroke="#dcdcdc" stroke-width="1"/><text x="526.1" y="802.6" font-size="11" fill="#666666" text-anchor="middle">12:45 PM</text><line x1="605.8499999999999" y1="787.5" x2="605.8499999999999" y2="790.5" stroke="#dcdcdc" stroke-width="1"/><text x="605.8" y="802.6" font-size="11" fill="#666666" text-anchor="middle">12:48 PM</text><line x1="685.5749999999999" y1="787.5" x2="685.5749999999999" y2="790.5" stroke="#dcdcdc" stroke-width="1"/><text x="685.6" y="802.6" font-size="11" fill="#666666" text-anchor="middle">12:51 PM</text><line x1="765.3" y1="787.5" x2="765.3" y2="790.5" stroke="#dcdcdc" stroke-width="1"/><text x="765.3" y="802.6" font-size="11" fill="#666666" text-anchor="middle">12:54 PM</text><line x1="845.025" y1="787.5" x2="845.025" y2="790.5" stroke="#dcdcdc" stroke-width="1"/><text x="845.0" y="802.6" font-size="11" fill="#666666" text-anchor="middle">12:57 PM</text><line x1="924.75" y1="787.5" x2="924.75" y2="790.5" stroke="#dcdcdc" stroke-width="1"/><text x="924.8" y="802.6" font-size="11" fill="#666666" text-anchor="middle">01:00 PM</text><line x1="1004.475" y1="787.5" x2="1004.475" y2="790.5" stroke="#dcdcdc" stroke-width="1"/><text x="1004.5" y="802.6" font-size="11" fill="#666666" text-anchor="middle">01:03 PM</text><line x1="1084.1999999999998" y1="787.5" x2="1084.1999999999998" y2="790.5" stroke="#dcdcdc" stroke-width="1"/><text x="1084.2" y="802.6" font-size="11" fill="#666666" text-anchor="middle">01:06 PM</text><line x1="1163.925" y1="787.5" x2="1163.925" y2="790.5" stroke="#dcdcdc" stroke-width="1"/><text x="1163.9" y="802.6" font-size="11" fill="#666666" text-anchor="middle">01:09 PM</text><line x1="1243.6499999999999" y1="787.5" x2="1243.6499999999999" y2="790.5" stroke="#dcdcdc" stroke-width="1"/><text x="1243.6" y="802.6" font-size="11" fill="#666666" text-anchor="middle">01:12 PM</text><line x1="1323.375" y1="787.5" x2="1323.375" y2="790.5" stroke="#dcdcdc" stroke-width="1"/><text x="1323.4" y="802.6" font-size="11" fill="#666666" text-anchor="middle">01:15 PM</text><line x1="1403.1" y1="787.5" x2="1403.1" y2="790.5" stroke="#dcdcdc" stroke-width="1"/><text x="1403.1" y="802.6" font-size="11" fill="#666666" text-anchor="middle">01:18 PM</text><line x1="1482.825" y1="787.5" x2="1482.825" y2="790.5" stroke="#dcdcdc" stroke-width="1"/><text x="1482.8" y="802.6" font-size="11" fill="#666666" text-anchor="middle">01:21 PM</text><line x1="1562.55" y1="787.5" x2="1562.55" y2="790.5" stroke="#dcdcdc" stroke-width="1"/><text x="1562.5" y="802.6" font-size="11" fill="#666666" text-anchor="middle">01:24 PM</text><line x1="1642.2749999999999" y1="787.5" x2="1642.2749999999999" y2="790.5" stroke="#dcdcdc" stroke-width="1"/><text x="1642.3" y="802.6" font-size="11" fill="#666666" text-anchor="middle">01:27 PM</text><line x1="1722" y1="787.5" x2="1722" y2="790.5" stroke="#dcdcdc" stroke-width="1"/><text x="1712.0" y="802.6" font-size="11.2" fill="#666666">01</text><text x="94.3" y="715.6" font-size="11.2" fill="#666666" text-anchor="middle" transform="rotate(-90 94.3 715.6)">MB</text><rect x="831.9" y="819.4" width="9.8" height="9.8" fill="#45b8c4"/><text x="846.8" y="828.2" font-size="11" fill="#555" textLength="23.4" lengthAdjust="spacingAndGlyphs">Used</text><rect x="871.8" y="819.4" width="9.8" height="9.8" fill="#2e917a"/><text x="887.4" y="828.2" font-size="11" fill="#555" textLength="46.0" lengthAdjust="spacingAndGlyphs">Non_heap</text><rect x="935" y="819.4" width="9.8" height="9.8" fill="#0a5cf0"/><text x="950.2" y="828.2" font-size="11" fill="#555" textLength="20.5" lengthAdjust="spacingAndGlyphs">Free</text><defs><pattern id="hatch" width="6" height="6" patternUnits="userSpaceOnUse" patternTransform="rotate(45)"><rect width="6" height="6" fill="rgba(255,255,255,0.06)"/><rect width="1.3" height="6" fill="rgba(255,255,255,0.22)"/></pattern></defs><rect x="1363" y="644" width="27" height="143" fill="url(#hatch)"/><line x1="1376.5" y1="644" x2="1376.5" y2="787" stroke="#666" stroke-width="1"/><circle cx="1376.5" cy="685.6" r="5" fill="rgba(105,195,207,0.35)"/><circle cx="1376.5" cy="685.6" r="3" fill="#69c3cf"/><circle cx="1376.5" cy="661.6" r="5" fill="rgba(46,145,122,0.35)"/><circle cx="1376.5" cy="661.6" r="3.2" fill="#3f9a83"/><circle cx="1376.5" cy="651.3" r="5" fill="rgba(10,92,240,0.35)"/><circle cx="1376.5" cy="651.3" r="3.5" fill="#1f66f0"/><rect x="1402" y="633.4" width="124.8" height="71.4" rx="4" fill="rgba(102,106,104,0.86)"/><text x="1408.0" y="649.8" font-size="10.2" fill="#f0f0f0" textLength="93.5" lengthAdjust="spacingAndGlyphs">23-Mar-23 01:17 PM</text><circle cx="1412.2" cy="661.7" r="3.8" fill="#69c3cf"/><text x="1418.0" y="665.2" font-size="10.2" fill="#f0f0f0" textLength="86.8" lengthAdjust="spacingAndGlyphs">Used : 314.9184MB</text><circle cx="1412.2" cy="676.6" r="3.8" fill="#56a994"/><text x="1418.0" y="680.1" font-size="10.2" fill="#f0f0f0" textLength="102.0" lengthAdjust="spacingAndGlyphs">Non_heap : 74.4817MB</text><circle cx="1412.2" cy="691.5" r="3.8" fill="#3f7cf4"/><text x="1418.0" y="695.0" font-size="10.2" fill="#f0f0f0" textLength="78.4" lengthAdjust="spacingAndGlyphs">Free : 30.9151MB</text><line x1="121.6" y1="1003.2" x2="1722" y2="1003.2" stroke="#e6e6e6" stroke-width="1"/><line x1="117.6" y1="1003.2" x2="121.6" y2="1003.2" stroke="#dcdcdc" stroke-width="1"/><line x1="121.6" y1="1035" x2="1722" y2="1035" stroke="#e6e6e6" stroke-width="1"/><line x1="117.6" y1="1035" x2="121.6" y2="1035" stroke="#dcdcdc" stroke-width="1"/><text x="113.5" y="1007.0" font-size="11.2" fill="#666666" text-anchor="end" textLength="11.1" lengthAdjust="spacingAndGlyphs">20</text><text x="113.5" y="1038.8" font-size="11.2" fill="#666666" text-anchor="end" textLength="11.1" lengthAdjust="spacingAndGlyphs">15</text><line x1="121.6" y1="987.2" x2="121.6" y2="1044" stroke="#dcdcdc" stroke-width="1"/><polygon points="121.60,1026.10 148.27,1029.10 174.94,1026.40 201.61,1026.90 228.28,1027.70 254.95,1028.80 281.62,1030.40 308.29,1026.90 334.96,1027.70 361.63,1031.50 388.30,1028.80 414.97,1029.60 441.64,1023.40 468.31,1028.30 494.98,1033.10 521.65,1031.20 548.32,1030.60 574.99,1034.50 601.66,1032.50 628.33,1029.30 655.00,1030.20 681.67,1028.60 708.34,1031.20 735.01,1029.60 761.68,1015.00 788.35,1022.10 815.02,1016.30 841.69,1024.70 868.36,1033.50 895.03,1031.20 921.70,1032.50 948.37,1031.20 975.04,1031.20 1001.71,1029.60 1028.38,1028.00 1055.05,1028.60 1081.72,1033.50 1108.39,1029.20 1135.06,1030.10 1161.73,1030.10 1188.40,1026.00 1215.07,1018.00 1241.74,1026.70 1268.41,1025.70 1295.08,1026.00 1321.75,1031.20 1348.42,1019.80 1375.09,1020.10 1401.76,1011.10 1428.43,1026.70 1455.10,1030.50 1481.77,1015.60 1508.44,1031.90 1535.11,1025.00 1561.78,1031.20 1588.45,1018.00 1615.12,1020.10 1641.79,1024.30 1668.46,1013.50 1695.13,1029.10 1721.80,1032.60 1721.80,1039.50 1695.13,1034.60 1668.46,1022.20 1641.79,1031.90 1615.12,1027.40 1588.45,1025.00 1561.78,1036.40 1535.11,1031.20 1508.44,1038.10 1481.77,1023.20 1455.10,1036.00 1428.43,1033.60 1401.76,1018.70 1375.09,1027.40 1348.42,1027.40 1321.75,1036.00 1295.08,1032.90 1268.41,1032.60 1241.74,1032.90 1215.07,1025.00 1188.40,1032.60 1161.73,1035.70 1135.06,1035.30 1108.39,1034.80 1081.72,1037.70 1055.05,1034.10 1028.38,1034.50 1001.71,1035.80 975.04,1037.00 948.37,1037.00 921.70,1037.00 895.03,1036.70 868.36,1038.30 841.69,1031.20 815.02,1024.40 788.35,1028.00 761.68,1023.10 735.01,1035.10 708.34,1036.70 681.67,1034.10 655.00,1035.80 628.33,1035.10 601.66,1038.30 574.99,1040.00 548.32,1036.70 521.65,1036.70 494.98,1039.60 468.31,1035.80 441.64,1031.00 414.97,1035.00 388.30,1036.40 361.63,1039.60 334.96,1034.50 308.29,1033.70 281.62,1036.90 254.95,1035.80 228.28,1035.00 201.61,1034.20 174.94,1033.70 148.27,1036.40 121.60,1033.70" fill="#56a994"/><polygon points="121.60,1033.70 148.27,1036.40 174.94,1033.70 201.61,1034.20 228.28,1035.00 254.95,1035.80 281.62,1036.90 308.29,1033.70 334.96,1034.50 361.63,1039.60 388.30,1036.40 414.97,1035.00 441.64,1031.00 468.31,1035.80 494.98,1039.60 521.65,1036.70 548.32,1036.70 574.99,1040.00 601.66,1038.30 628.33,1035.10 655.00,1035.80 681.67,1034.10 708.34,1036.70 735.01,1035.10 761.68,1023.10 788.35,1028.00 815.02,1024.40 841.69,1031.20 868.36,1038.30 895.03,1036.70 921.70,1037.00 948.37,1037.00 975.04,1037.00 1001.71,1035.80 1028.38,1034.50 1055.05,1034.10 1081.72,1037.70 1108.39,1034.80 1135.06,1035.30 1161.73,1035.70 1188.40,1032.60 1215.07,1025.00 1241.74,1032.90 1268.41,1032.60 1295.08,1032.90 1321.75,1036.00 1348.42,1027.40 1375.09,1027.40 1401.76,1018.70 1428.43,1033.60 1455.10,1036.00 1481.77,1023.20 1508.44,1038.10 1535.11,1031.20 1561.78,1036.40 1588.45,1025.00 1615.12,1027.40 1641.79,1031.90 1668.46,1022.20 1695.13,1034.60 1721.80,1039.50 1721.80,1060 121.60,1060" fill="#69c3cf"/><text x="95.5" y="1039.2" font-size="11.2" fill="#666666" text-anchor="end" transform="rotate(-90 95.5 1039.2)">Utilization (%)</text><defs><linearGradient id="bsh" x1="0" y1="0" x2="0" y2="1"><stop offset="0" stop-color="#000" stop-opacity="0"/><stop offset="1" stop-color="#000" stop-opacity="0.07"/></linearGradient></defs><rect x="4" y="1037.5" width="1847" height="6" fill="url(#bsh)"/><rect x="4" y="1043.5" width="1847" height="26.5" fill="#ffffff"/><rect x="4" y="1043.5" width="1847" height="1" fill="#e2e2e2"/><g fill="#8f8f8f"><ellipse cx="41.6" cy="1056.2" rx="3.4" ry="3.3" fill="none" stroke="#8f8f8f" stroke-width="1.2"/><path d="M41.2 1057.5 L40.8 1061.2 L44.6 1058.6 Z"/><ellipse cx="46.2" cy="1054" rx="5.9" ry="4.4"/><path d="M44 1057.2 L43.5 1060.8 L47 1058 Z"/></g><text x="45.0" y="1070.5" font-size="9" fill="#8f8f8f" text-anchor="middle" textLength="20.5" lengthAdjust="spacingAndGlyphs">Chats</text><g fill="#8f8f8f"><circle cx="129.6" cy="1052.3" r="1.9"/><circle cx="139.4" cy="1052.3" r="1.9"/><path d="M126.6 1058.6 C126.6 1055.6 127.9 1054.7 129.6 1054.7 C130.7 1054.7 131.5 1055.1 132 1055.8 L131.2 1058.6 Z"/><path d="M142.4 1058.6 C142.4 1055.6 141.1 1054.7 139.4 1054.7 C138.3 1054.7 137.5 1055.1 137 1055.8 L137.8 1058.6 Z"/><circle cx="134.5" cy="1053.5" r="2.9" stroke="#fff" stroke-width="0.6"/><path d="M129.8 1061.6 C129.8 1058.2 131.8 1056.9 134.5 1056.9 C137.2 1056.9 139.2 1058.2 139.2 1061.6 Z" stroke="#fff" stroke-width="0.6"/></g><text x="134.5" y="1070.5" font-size="9" fill="#8f8f8f" text-anchor="middle" textLength="32.0" lengthAdjust="spacingAndGlyphs">Channels</text><g fill="#8f8f8f"><path d="M217.8 1061.6 C217.8 1058 219.8 1056.6 223.1 1056.6 C226.4 1056.6 228.4 1058 228.4 1061.6 Z"/><circle cx="223.1" cy="1054" r="3.7" stroke="#fff" stroke-width="0.6"/></g><text x="223.3" y="1070.5" font-size="9" fill="#8f8f8f" text-anchor="middle" textLength="31.7" lengthAdjust="spacingAndGlyphs">Contacts</text><line x1="265.5" y1="1044" x2="265.5" y2="1070" stroke="#e0e0e0" stroke-width="1"/><text x="275.5" y="1061.8" font-size="12" fill="#a9a9a9" textLength="192.5" lengthAdjust="spacingAndGlyphs">Here is your Smart Chat (Ctrl+Space)</text><line x1="1689.5" y1="1044" x2="1689.5" y2="1070" stroke="#e0e0e0" stroke-width="1"/><circle cx="1709.4" cy="1059.3" r="9.5" fill="#4a8ed4"/><clipPath id="sup"><circle cx="1709.4" cy="1059.3" r="8.6"/></clipPath><g clip-path="url(#sup)" fill="#fff"><circle cx="1709.4" cy="1057.2" r="3.4"/><path d="M1703.2 1069 C1703.5 1064 1706 1062.2 1709.4 1062.2 C1712.8 1062.2 1715.3 1064 1715.6 1069 Z"/></g><path d="M1704.6 1059 C1704.6 1052.3 1714.2 1052.3 1714.2 1059" stroke="#fff" stroke-width="1" fill="none"/><rect x="1703.6" y="1057.6" width="2" height="3.6" rx="1" fill="#fff"/><rect x="1713.2" y="1057.6" width="2" height="3.6" rx="1" fill="#fff"/><text x="1725.0" y="1065.0" font-size="15.9" fill="#1e1e1e" textLength="55.2" lengthAdjust="spacingAndGlyphs">Support</text><line x1="1789.5" y1="1044" x2="1789.5" y2="1070" stroke="#e0e0e0" stroke-width="1"/><g fill="#9b9b9b"><path d="M1800 1055.5 H1803 L1810.5 1051.5 V1064 L1803 1060 H1800 Z"/><path d="M1802.5 1060 L1804.5 1060 L1805.5 1065 L1803.5 1065 Z"/><ellipse cx="1811" cy="1057.8" rx="1.6" ry="6" fill="none" stroke="#9b9b9b" stroke-width="1"/></g><line x1="1822.3" y1="1044" x2="1822.3" y2="1070" stroke="#e0e0e0" stroke-width="1"/><g fill="none" stroke="#8a8a8a" stroke-width="1"><rect x="1830.5" y="1052.5" width="12" height="10" rx="1.5"/><rect x="1833" y="1054.8" width="9" height="8.5" rx="1" fill="#fff"/><path d="M1835 1057.5 H1840 M1835 1060 H1838"/></g></svg></body></html>
